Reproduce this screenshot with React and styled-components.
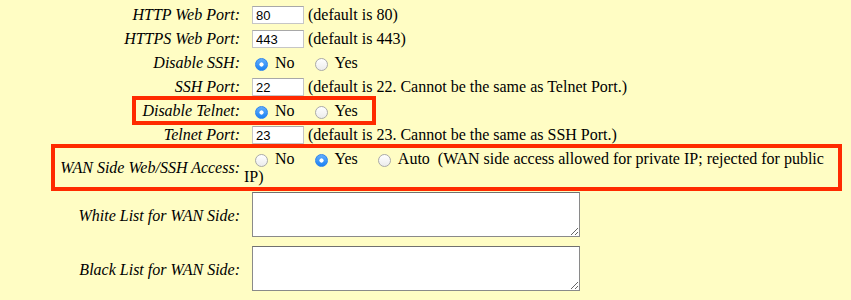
import React from 'react';
import styled, { createGlobalStyle } from 'styled-components';

const GlobalStyle = createGlobalStyle`
  html, body {
    margin: 0;
    background: #fffdc4;
  }
  body {
    font-family: "Liberation Serif", "Times New Roman", serif;
    font-size: 16px;
    color: #000;
  }
`;

const Form = styled.div`
  position: relative;
  width: 838px;
  padding-top: 6px;
  display: flex;
  flex-direction: column;
  gap: 6px;
`;

const Row = styled.div`
  display: grid;
  grid-template-columns: 240px 594px;
  column-gap: 4px;
  align-items: center;
  min-height: ${props => props.$height || 18}px;
  line-height: 18px;
`;

const Label = styled.div`
  font-style: italic;
  text-align: right;
  white-space: nowrap;
`;

const Value = styled.div`
  align-self: ${props => props.$top ? 'start' : 'center'};
`;

const TextInput = styled.input.attrs({ type: 'text' })`
  box-sizing: border-box;
  width: 52px;
  height: 18px;
  margin: 0 4px 0 8px;
  padding: 0 3px;
  vertical-align: top;
  border: 1px solid #c6c6c6;
  border-top-color: #a8a8a8;
  background: #fff;
  font-family: "Liberation Sans", Arial, sans-serif;
  font-size: 13px;
  color: #000;
  outline: none;
`;

const Choice = styled.label`
  margin-right: ${props => props.$last ? 0 : 15}px;
  &:first-child {
    margin-left: 6px;
  }
`;

const Radio = styled.input.attrs({ type: 'radio' })`
  appearance: none;
  box-sizing: border-box;
  width: 13px;
  height: 13px;
  margin: 0 7px 0 5px;
  vertical-align: middle;
  border-radius: 50%;
  border: 1px solid #a9a9a9;
  background: linear-gradient(#ffffff, #ececec);

  &:checked {
    border-color: #2c83ee;
    background:
      radial-gradient(circle, #fff 0 1.8px, transparent 2.4px),
      linear-gradient(#62adfb, #1b82f4);
  }
`;

const TextArea = styled.textarea`
  display: block;
  box-sizing: border-box;
  width: 328px;
  height: 45px;
  margin-left: 8px;
  border: 1px solid #8a8a8a;
  border-top-color: #707070;
  background: #fff;
`;

const Frame = styled.div`
  position: absolute;
  top: ${props => props.$top}px;
  left: ${props => props.$left}px;
  width: ${props => props.$width}px;
  height: ${props => props.$height}px;
  box-sizing: border-box;
  border: 4px solid #ff2a00;
  pointer-events: none;
`;

function PortRow({ label, value, note }) {
  return (
    <Row>
      <Label>{label}:</Label>
      <Value>
        <TextInput defaultValue={value} />
        {note}
      </Value>
    </Row>
  );
}

function ChoiceRow({ label, name, options, checked, after, height }) {
  return (
    <Row $height={height}>
      <Label>{label}:</Label>
      <Value $top={!!after}>
        {options.map((opt, idx) => (
          <Choice key={opt} $last={idx === options.length - 1}>
            <Radio name={name} defaultChecked={opt === checked} />
            {opt}
          </Choice>
        ))}
        {after}
      </Value>
    </Row>
  );
}

export default function App() {
  return (
    <>
      <GlobalStyle />
      <Form>
        <PortRow label="HTTP Web Port" value="80" note="(default is 80)" />
        <PortRow label="HTTPS Web Port" value="443" note="(default is 443)" />
        <ChoiceRow label="Disable SSH" name="ssh" options={['No', 'Yes']} checked="No" />
        <PortRow label="SSH Port" value="22" note="(default is 22. Cannot be the same as Telnet Port.)" />
        <ChoiceRow label="Disable Telnet" name="telnet" options={['No', 'Yes']} checked="No" />
        <PortRow label="Telnet Port" value="23" note="(default is 23. Cannot be the same as SSH Port.)" />
        <ChoiceRow
          label="WAN Side Web/SSH Access"
          name="wan"
          options={['No', 'Yes', 'Auto']}
          checked="Yes"
          height={36}
          after={'\u00a0 (WAN side access allowed for private IP; rejected for public IP)'}
        />
        <Row $height={48}>
          <Label>White List for WAN Side:</Label>
          <Value $top><TextArea /></Value>
        </Row>
        <Row $height={48}>
          <Label>Black List for WAN Side:</Label>
          <Value $top><TextArea /></Value>
        </Row>
        <Frame $top={96} $left={132} $width={244} $height={29} />
        <Frame $top={144} $left={51} $width={791} $height={47} />
      </Form>
    </>
  );
}
